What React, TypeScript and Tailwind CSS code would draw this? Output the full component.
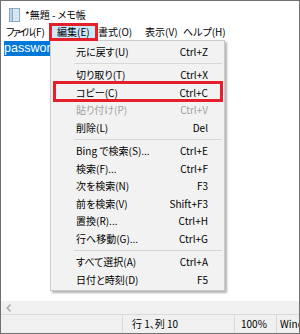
const font = { fontFamily: '"Noto Sans CJK JP", sans-serif' }

type Item = { label: string; keys: string; disabled?: boolean } | 'sep'

const editItems: Item[] = [
  { label: '元に戻す(U)', keys: 'Ctrl+Z' },
  'sep',
  { label: '切り取り(T)', keys: 'Ctrl+X' },
  { label: 'コピー(C)', keys: 'Ctrl+C' },
  { label: '貼り付け(P)', keys: 'Ctrl+V', disabled: true },
  { label: '削除(L)', keys: 'Del' },
  'sep',
  { label: 'Bing で検索(S)...', keys: 'Ctrl+E' },
  { label: '検索(F)...', keys: 'Ctrl+F' },
  { label: '次を検索(N)', keys: 'F3' },
  { label: '前を検索(V)', keys: 'Shift+F3' },
  { label: '置換(R)...', keys: 'Ctrl+H' },
  { label: '行へ移動(G)...', keys: 'Ctrl+G' },
  'sep',
  { label: 'すべて選択(A)', keys: 'Ctrl+A' },
  { label: '日付と時刻(D)', keys: 'F5' },
]

function NotepadIcon() {
  return (
    <svg width="13" height="16" viewBox="0 0 13 16">
      <rect x="1.5" y="1.5" width="10" height="13" fill="#dbe9f4" stroke="#8aa9c2" />
      <rect x="1.5" y="1.5" width="3" height="13" fill="#b9d1e4" stroke="#8aa9c2" />
      <line x1="6" y1="5" x2="10" y2="5" stroke="#c9dbe9" />
      <line x1="6" y1="8" x2="10" y2="8" stroke="#c9dbe9" />
      <line x1="6" y1="11" x2="10" y2="11" stroke="#c9dbe9" />
    </svg>
  )
}

export default function App() {
  return (
    <div
      className="relative w-[300px] h-[334px] overflow-hidden bg-white border border-[#717171] flex flex-col text-[10px] text-black [font-feature-settings:'palt']"
      style={font}
    >
      {/* Title bar */}
      <div className="h-[22px] shrink-0 flex items-center pl-[7px] gap-[4px] pt-[6px]">
        <NotepadIcon />
        <span className="leading-none">*無題 - メモ帳</span>
      </div>

      {/* Menu bar */}
      <div className="h-[17px] shrink-0 flex items-center leading-none whitespace-nowrap pt-[1px]">
        <span className="w-[49px] pl-[5px]">
          <span className="tracking-[-2px]">ファイル</span>(F)
        </span>
        <span className="w-[46px] h-full flex items-center pl-[6px] bg-[#cce8ff] border border-[#99d1ff]">編集(E)</span>
        <span className="w-[43px] pl-[2px]">書式(O)</span>
        <span className="w-[39px] pl-[6px]">表示(V)</span>
        <span className="pl-[5px]">ヘルプ(H)</span>
      </div>

      {/* Text area */}
      <div className="flex-1 pl-[3px]">
        <span className="inline-block bg-[#0078d7] text-white text-[12.5px] leading-[15px] pr-[3px]" style={{ fontFamily: '"Liberation Sans", sans-serif' }}>
          password
        </span>
      </div>

      {/* Horizontal scrollbar */}
      <div className="h-[13px] shrink-0 bg-[#f0f0f0] flex items-center pl-[5px]">
        <svg width="6" height="8" viewBox="0 0 6 8">
          <path d="M4.5 0.5 L1.2 4 L4.5 7.5" fill="none" stroke="#a3a3a3" strokeWidth="1.3" />
        </svg>
      </div>

      {/* Status bar */}
      <div className="h-[19px] shrink-0 bg-[#f0f0f0] border-t border-[#dadada] flex items-stretch leading-none whitespace-nowrap">
        <div className="w-[122px] border-r border-[#dadada]" />
        <div className="w-[112px] border-r border-[#dadada] flex items-center pl-[9px]">行 1、列 10</div>
        <div className="w-[42px] border-r border-[#dadada] flex items-center pl-[6px]">100%</div>
        <div className="flex-1 flex items-center pl-[3px] overflow-hidden">Windows (CRLF)</div>
      </div>

      {/* Edit dropdown */}
      <div className="absolute left-[49px] top-[39px] w-[175px] bg-[#f2f2f2] border border-[#cccccc] pt-[2px] pb-[1px] shadow-[2px_2px_2px_rgba(0,0,0,0.3)]">
        {editItems.map((item, i) =>
          item === 'sep' ? (
            <div key={i} className="h-[6px] flex items-center pl-[23px] pr-[2px]">
              <div className="h-px w-full bg-[#d7d7d7]" />
            </div>
          ) : (
            <div
              key={i}
              className={`h-[17.5px] flex items-center justify-between pl-[25px] pr-[16px] leading-none ${
                item.disabled ? 'text-[#a0a0a0]' : 'text-black'
              }`}
            >
              <span>{item.label}</span>
              <span>{item.keys}</span>
            </div>
          )
        )}
      </div>

      {/* Highlight boxes */}
      <div className="absolute left-[48px] top-[22px] w-[49px] h-[18px] border-[3px] border-[#e6202b]" />
      <div className="absolute left-[52px] top-[80px] w-[170px] h-[21px] border-[3px] border-[#e6202b]" />
    </div>
  )
}
